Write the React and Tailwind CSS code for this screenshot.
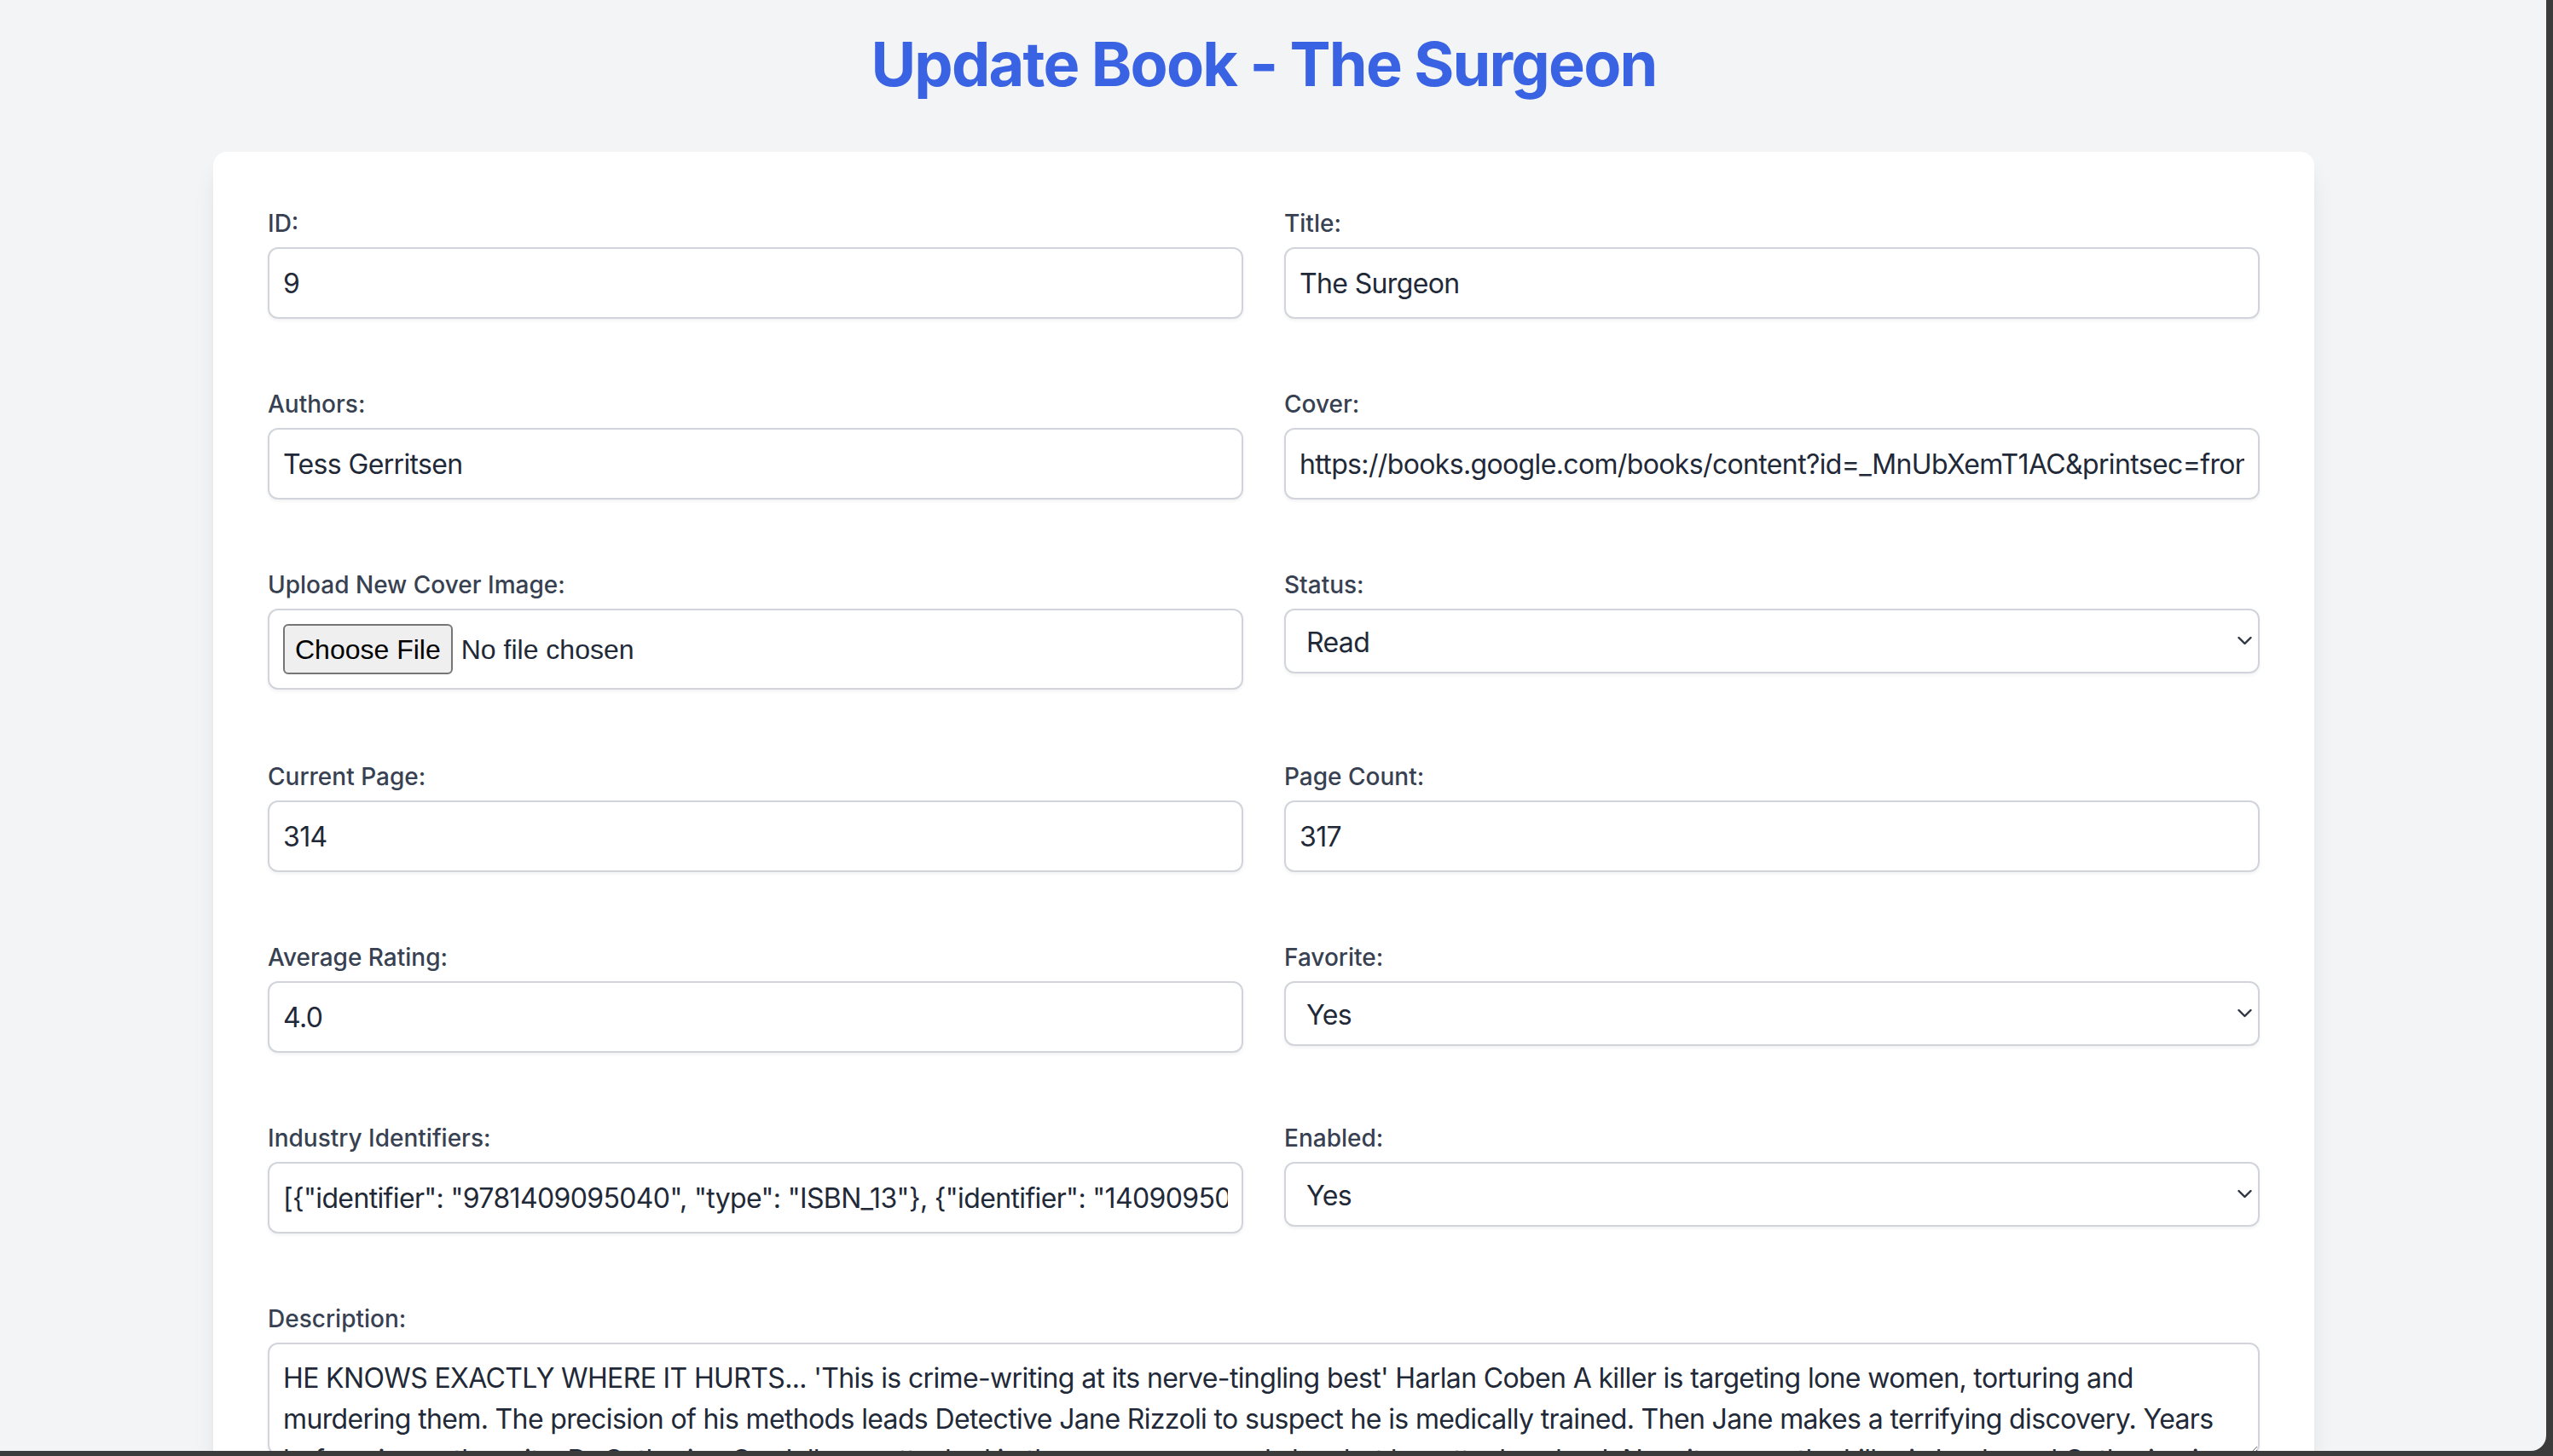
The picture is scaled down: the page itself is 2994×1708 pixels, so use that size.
import { useState } from 'react';

const inputCls =
    "block w-full h-[84px] px-[16px] bg-white border-2 border-[#d1d5db] rounded-[12px] text-[32px] leading-[48px] tracking-[-0.02em] text-[#1f2937] shadow-[0_2px_4px_rgba(0,0,0,0.06)] outline-none";

const selectCls =
    "block w-full h-[76px] pl-[24px] pr-[40px] pt-[3px] bg-white border-2 border-[#d1d5db] rounded-[12px] text-[32px] tracking-[-0.02em] text-[#1f2937] shadow-[0_2px_4px_rgba(0,0,0,0.06)] outline-none appearance-none";

function Label({ htmlFor, children }) {
    return (
        <label htmlFor={htmlFor} className="block mb-[8px] text-[28px] leading-[40px] font-medium text-[#374151]">
            {children}
        </label>
    );
}

function TextField({ id, label, value }) {
    return (
        <div>
            <Label htmlFor={id}>{label}</Label>
            <input id={id} type="text" defaultValue={value} className={inputCls} />
        </div>
    );
}

function SelectField({ id, label, value, options }) {
    return (
        <div>
            <Label htmlFor={id}>{label}</Label>
            <div className="relative">
                <select id={id} defaultValue={value} className={selectCls}>
                    {options.map((o) => (
                        <option key={o} value={o}>{o}</option>
                    ))}
                </select>
                {/* native-looking chevron */}
                <svg
                    className="absolute right-[9px] top-1/2 -translate-y-1/2 pointer-events-none"
                    width="17"
                    height="11"
                    viewBox="0 0 17 11"
                    fill="none"
                >
                    <path d="M1.5 1.5 L8.5 8.5 L15.5 1.5" stroke="#2d3340" strokeWidth="2.4" strokeLinecap="round" strokeLinejoin="round" />
                </svg>
            </div>
        </div>
    );
}

const description =
    "HE KNOWS EXACTLY WHERE IT HURTS... 'This is crime-writing at its nerve-tingling best' Harlan Coben A killer is targeting lone women, torturing and murdering them. The precision of his methods leads Detective Jane Rizzoli to suspect he is medically trained. Then Jane makes a terrifying discovery. Years before, in another city, Dr Catherine Cordell was attacked in the same way - and she shot her attacker dead. Now it seems the killer is back, and Catherine is the one woman who knows how he thinks.";

export default function App() {
    const [fileName] = useState(null);

    return (
        <div className="w-[2994px] h-[1708px] overflow-hidden bg-[#3b3b3b]">
            <div className="w-[2986px] h-[1702px] overflow-hidden rounded-br-[18px] bg-[#f3f4f6] font-['Inter','Noto_Sans',sans-serif]">
                <div className="w-[2464px] ml-[250px] pt-[35px]">
                    <h1 className="mb-[63px] text-center text-[72px] leading-[80px] font-bold tracking-[-0.025em] text-[#3a63e4]">
                        Update Book - The Surgeon
                    </h1>

                    <form className="bg-white rounded-[16px] p-[64px] shadow-[0_20px_30px_-6px_rgba(0,0,0,0.1),0_8px_12px_-8px_rgba(0,0,0,0.1)]">
                        <div className="grid grid-cols-2 items-start gap-x-[48px] gap-y-[80px]">
                            <TextField id="id" label="ID:" value="9" />
                            <TextField id="title" label="Title:" value="The Surgeon" />

                            <TextField id="authors" label="Authors:" value="Tess Gerritsen" />
                            <TextField
                                id="cover"
                                label="Cover:"
                                value="https://books.google.com/books/content?id=_MnUbXemT1AC&printsec=frontcover&img=1&zoom=1&edge=curl&source=gbs_api"
                            />

                            <div className="pb-[2px]">
                                <Label htmlFor="cover_file">Upload New Cover Image:</Label>
                                <div className="flex items-center h-[95px] px-[16px] bg-white border-2 border-[#d1d5db] rounded-[12px] shadow-[0_2px_4px_rgba(0,0,0,0.06)] font-['Liberation_Sans',Arial,sans-serif] text-[32px]">
                                    <button
                                        type="button"
                                        id="cover_file"
                                        className="h-[59px] px-[12px] bg-[#efefef] border-2 border-[#767676] rounded-[6px] text-black leading-none"
                                    >
                                        Choose File
                                    </button>
                                    <span className="ml-[10px] text-[#1f2937]">{fileName || 'No file chosen'}</span>
                                </div>
                            </div>
                            <SelectField id="status" label="Status:" value="Read" options={['Unread', 'Reading', 'Read']} />

                            <TextField id="current_page" label="Current Page:" value="314" />
                            <TextField id="page_count" label="Page Count:" value="317" />

                            <TextField id="average_rating" label="Average Rating:" value="4.0" />
                            <SelectField id="favorite" label="Favorite:" value="Yes" options={['Yes', 'No']} />

                            <TextField
                                id="industry_identifiers"
                                label="Industry Identifiers:"
                                value='[{"identifier": "9781409095040", "type": "ISBN_13"}, {"identifier": "1409095045", "type": "ISBN_10"}]'
                            />
                            <SelectField id="enabled" label="Enabled:" value="Yes" options={['Yes', 'No']} />

                            <div className="col-span-2">
                                <Label htmlFor="description">Description:</Label>
                                <textarea
                                    id="description"
                                    defaultValue={description}
                                    className="block w-full h-[132px] pl-[16px] pr-[26px] py-[16px] bg-white border-2 border-[#d1d5db] rounded-[12px] text-[32px] leading-[48px] tracking-[-0.02em] text-[#1f2937] shadow-[0_2px_4px_rgba(0,0,0,0.06)] outline-none overflow-hidden resize-y"
                                />
                            </div>
                        </div>
                    </form>
                </div>
            </div>
        </div>
    );
}
